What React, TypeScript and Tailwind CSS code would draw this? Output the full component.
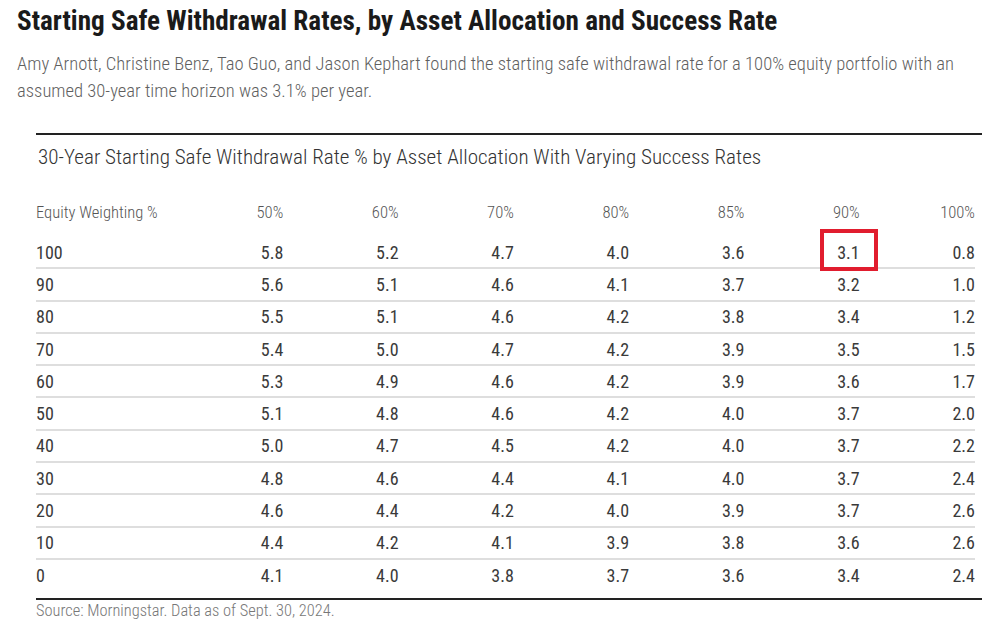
const cols = ['50%', '60%', '70%', '80%', '85%', '90%', '100%'];
const rows: [string, string[]][] = [
  ['100', ['5.8', '5.2', '4.7', '4.0', '3.6', '3.1', '0.8']],
  ['90', ['5.6', '5.1', '4.6', '4.1', '3.7', '3.2', '1.0']],
  ['80', ['5.5', '5.1', '4.6', '4.2', '3.8', '3.4', '1.2']],
  ['70', ['5.4', '5.0', '4.7', '4.2', '3.9', '3.5', '1.5']],
  ['60', ['5.3', '4.9', '4.6', '4.2', '3.9', '3.6', '1.7']],
  ['50', ['5.1', '4.8', '4.6', '4.2', '4.0', '3.7', '2.0']],
  ['40', ['5.0', '4.7', '4.5', '4.2', '4.0', '3.7', '2.2']],
  ['30', ['4.8', '4.6', '4.4', '4.1', '4.0', '3.7', '2.4']],
  ['20', ['4.6', '4.4', '4.2', '4.0', '3.9', '3.7', '2.6']],
  ['10', ['4.4', '4.2', '4.1', '3.9', '3.8', '3.6', '2.6']],
  ['0', ['4.1', '4.0', '3.8', '3.7', '3.6', '3.4', '2.4']],
];

export default function App() {
  return (
    <div className="w-[992px] h-[625px] overflow-hidden bg-white font-['Roboto_Condensed',sans-serif] pl-[17px] pt-[5px]">
      <h1 className="text-[27.2px] leading-[32px] font-bold text-[#1a1a1a]">
        Starting Safe Withdrawal Rates, by Asset Allocation and Success Rate
      </h1>
      <p className="mt-[14px] text-[18.6px] leading-[27px] font-light text-[#5f5f5f] w-[965px]">
        Amy Arnott, Christine Benz, Tao Guo, and Jason Kephart found the starting safe withdrawal rate for a 100% equity portfolio with an assumed 30-year time horizon was 3.1% per year.
      </p>
      <div className="ml-[19px] mt-[28px] w-[946px] border-t-2 border-[#222]">
        <div className="mt-[8px] ml-[2px] text-[21.1px] leading-[28px] font-light text-[#333]">
          30-Year Starting Safe Withdrawal Rate % by Asset Allocation With Varying Success Rates
        </div>
        <div className="w-[939px]">
          <div className="grid grid-cols-[132px_repeat(7,1fr)] h-[66px] items-end pb-[14px] text-[16.6px] leading-[20px] font-light text-[#555]">
            <div>Equity Weighting %</div>
            {cols.map((c) => (
              <div key={c} className="text-right">{c}</div>
            ))}
          </div>
          {rows.map(([label, vals], i) => (
            <div
              key={label}
              className={
                i < rows.length - 1
                  ? 'grid grid-cols-[132px_repeat(7,1fr)] h-[32.3px] border-b-2 border-[#dedede] text-[18px] text-[#3a3a3a]'
                  : 'grid grid-cols-[132px_repeat(7,1fr)] h-[30.3px] text-[18px] text-[#3a3a3a]'
              }
            >
              <div className="flex items-center">{label}</div>
              {vals.map((v, j) => (
                <div key={j} className="relative flex items-center justify-end">
                  {v}
                  {i === 0 && j === 5 && (
                    <div className="absolute right-[-18px] top-[-8px] w-[58px] h-[42px] border-4 border-[#e11d2e]" />
                  )}
                </div>
              ))}
            </div>
          ))}
        </div>
        <div className="mt-[8px] border-t-2 border-[#222]" />
        <div className="mt-[1px] text-[16.4px] leading-[20px] font-light text-[#777]">
          Source: Morningstar. Data as of Sept. 30, 2024.
        </div>
      </div>
    </div>
  );
}
